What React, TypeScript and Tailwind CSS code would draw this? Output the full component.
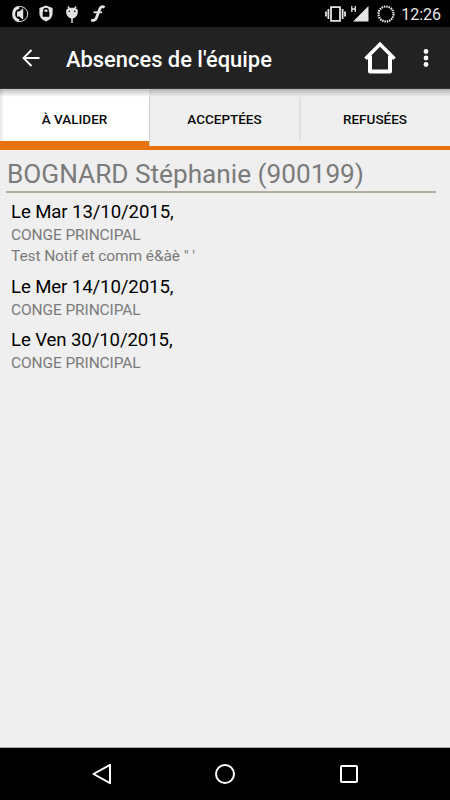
const absences = [
  {
    date: "Le Mar 13/10/2015,",
    type: "CONGE PRINCIPAL",
    comment: "Test Notif et comm é&àè \" '",
  },
  { date: "Le Mer 14/10/2015,", type: "CONGE PRINCIPAL" },
  { date: "Le Ven 30/10/2015,", type: "CONGE PRINCIPAL" },
];

const StatusBar = () => (
  <div className="flex h-[27px] items-center justify-between bg-black pr-[9px] pl-[11px] text-[#e4e4e4]">
    <div className="flex items-center gap-[10px]">
      <svg width="18" height="18" viewBox="0 0 18 18" fill="none">
        <path d="M8 2.2A7 7 0 0 0 8 15.8" stroke="currentColor" strokeWidth="3" />
        <path d="M8 1.6A7.5 7.5 0 1 1 8 16.4" stroke="currentColor" strokeWidth="1" />
        <path d="M6 6.6h2.2l4-3.4v11.6l-4-3.4H6z" fill="currentColor" />
      </svg>
      <svg width="14" height="17" viewBox="0 0 14 17">
        <path d="M7 .6 13.6 3v5c0 4-2.6 7-6.6 8.5C3 15 .4 12 .4 8V3z" fill="currentColor" />
        <path d="M4.8 7V5.7a2.2 2.2 0 0 1 4.4 0V7" stroke="#000" strokeWidth="1.3" fill="none" />
        <path d="M3.7 6.8h6.6v5H3.7z" fill="#000" />
      </svg>
      <svg width="18" height="18" viewBox="0 0 18 18">
        <path d="M5 1.5 6.5 4M13 1.5 11.5 4M9 12v6" stroke="currentColor" strokeWidth="1.5" />
        <path d="M3.5 4.5C6 2.3 12 2.3 14.5 4.5 16 9 13 13.5 9 13.5S2 9 3.5 4.5z" fill="currentColor" />
        <circle cx="6.3" cy="6.3" r=".8" fill="#000" />
        <circle cx="11.7" cy="6.3" r=".8" fill="#000" />
      </svg>
      <svg width="16" height="17" viewBox="0 0 16 17" fill="none" className="-ml-px" stroke="currentColor">
        <path d="M14.5 2.5C12.5 1 10.8 1.5 9.8 4L6.5 12.5C5.5 15 3.8 16 1.2 15" strokeWidth="2.8" />
        <path d="M3.5 7.3h8.5" strokeWidth="1.8" />
      </svg>
    </div>
    <div className="flex items-center">
      <svg width="21" height="16" viewBox="0 0 21 16" fill="none" stroke="currentColor">
        <path d="M6 1.2h9v13.6H6z" strokeWidth="1.8" />
        <path d="M3.4 3v10M17.6 3v10M1 5.5v5M20 5.5v5" strokeWidth="1.8" />
      </svg>
      <svg width="18" height="17" viewBox="0 0 18 17" className="ml-[5px]">
        <path d="M17.5 1v15.5H2z" fill="currentColor" />
        <path d="M.8 1v6M4.3 1v6M.8 4h3.5" stroke="currentColor" strokeWidth="1.3" />
      </svg>
      <svg width="18" height="18" viewBox="0 0 18 18" fill="none" className="ml-[8px]">
        <circle cx="9" cy="9" r="7.5" stroke="currentColor" strokeWidth="2.2" strokeDasharray="1.55 .806" />
      </svg>
      <span className="ml-[6px] pt-[3px] text-[16px] leading-none">12:26</span>
    </div>
  </div>
);

const Header = () => (
  <header className="flex h-[61px] items-center bg-[#222] pl-[22px] text-white">
    <svg width="18" height="18" viewBox="0 0 18 18" fill="none" stroke="currentColor" strokeWidth="1.8">
      <path d="M17.5 9H1.5M9.5 1 1.5 9l8 8" />
    </svg>
    <h1 className="ml-[26px] pt-[4px] text-[21.9px] leading-none font-medium">
      Absences de l'équipe
    </h1>
    <svg width="32" height="34" viewBox="0 0 32 34" fill="none" className="ml-auto" stroke="currentColor">
      <path d="M1.5 17.8 16 3.3l14.5 14.5" strokeWidth="3.6" />
      <path d="M6 14.5v16h20v-16" strokeWidth="4" strokeLinejoin="round" />
    </svg>
    <svg width="6" height="20" viewBox="0 0 6 20" fill="currentColor" className="mr-[21px] ml-[27px]">
      <circle cx="3" cy="3.5" r="2.4" />
      <circle cx="3" cy="10" r="2.4" />
      <circle cx="3" cy="16.5" r="2.4" />
    </svg>
  </header>
);

const Tabs = () => (
  <nav className="relative flex h-[62px] text-center text-[13.5px] leading-[63px] font-medium text-[#0a0a0a]">
    <div className="w-[149px] border-b-[9px] border-[#e8730c] bg-white bg-linear-to-r from-[#e6e6e6] to-white to-[4px]">
      À VALIDER
    </div>
    <div className="relative w-[151px] border-b-4 border-[#e8730c] bg-[#efefef]">
      <span className="absolute top-[9px] left-0 h-[49px] w-px bg-[#cfcfcf]" />
      ACCEPTÉES
    </div>
    <div className="relative w-[150px] border-b-4 border-[#e8730c] bg-[#efefef]">
      <span className="absolute top-[9px] -left-px h-[43px] w-[2px] bg-[#e0e0e0]" />
      REFUSÉES
    </div>
    <div className="absolute inset-x-0 top-0 h-[9px] border-t border-[#333] bg-linear-to-b from-black/25 to-transparent" />
  </nav>
);

const App = () => {
  return (
    <div className="flex h-[800px] w-[450px] flex-col overflow-hidden bg-[#efefef] font-[Roboto,sans-serif]">
      <StatusBar />
      <Header />
      <Tabs />

      <main className="flex-1">
        <h2 className="mr-[14px] ml-[6px] h-[43px] border-b-2 border-[#b5ada0] pl-px text-[26.2px] leading-[49px] text-[#7b7b7b]">
          BOGNARD Stéphanie (900199)
        </h2>
        <ul className="px-[11px] pt-[6px]">
          {absences.map((absence) => (
            <li
              key={absence.date}
              className="mb-[5.5px] border-b border-[#ececec]"
            >
              <p className="text-[18.6px] leading-[26px] tracking-[-0.1px] text-black">
                {absence.date}
              </p>
              <p className="text-[15.5px] leading-[21px] tracking-[-0.1px] text-[#7b7b7b]">
                {absence.type}
              </p>
              {absence.comment && (
                <p className="text-[15.5px] leading-[21px] tracking-[-0.1px] text-[#7b7b7b]">
                  {absence.comment}
                </p>
              )}
            </li>
          ))}
        </ul>
      </main>

      <footer className="flex h-[53px] items-center border-t border-[#aaa] bg-black pl-[92px] text-white">
        <svg width="20" height="22" viewBox="0 0 20 22" fill="none" stroke="currentColor" strokeWidth="2" strokeLinejoin="round">
          <path d="M1.5 11 18 1.8v18.4z" />
        </svg>
        <svg width="22" height="22" viewBox="0 0 22 22" fill="none" stroke="currentColor" strokeWidth="2" className="ml-[102px]">
          <circle cx="11" cy="11" r="9" />
        </svg>
        <svg width="18" height="18" viewBox="0 0 18 18" fill="none" stroke="currentColor" strokeWidth="2" className="ml-[104px]">
          <rect x="1" y="1" width="16" height="16" rx="1" />
        </svg>
      </footer>
    </div>
  );
};

export default App;
